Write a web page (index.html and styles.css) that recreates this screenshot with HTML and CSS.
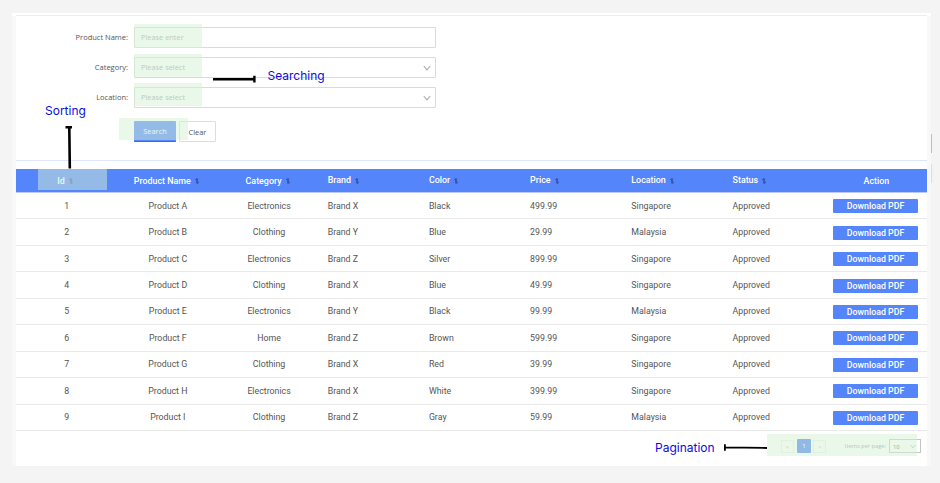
FILE: index.html
```
<!DOCTYPE html>
<html lang="en">
<head>
<meta charset="utf-8">
<title>Products</title>
<link rel="stylesheet" href="styles.css">
</head>
<body>
<main class="page">
  <form class="filters">
    <div class="field"><label>Product Name:</label><div class="control"><span>Please enter</span></div></div>
    <div class="field"><label>Category:</label><div class="control"><span>Please select</span><svg class="chev" viewBox="0 0 8 6"><path d="M.8 1 4 4.8 7.2 1"/></svg></div></div>
    <div class="field"><label>Location:</label><div class="control"><span>Please select</span><svg class="chev" viewBox="0 0 8 6"><path d="M.8 1 4 4.8 7.2 1"/></svg></div></div>
    <div class="buttons"><button type="button" class="search">Search</button><button type="button" class="clear">Clear</button></div>
  </form>
  <section class="products">
    <div class="row head" id="head"></div>
    <div id="rows"></div>
    <div class="pager">
      <span class="step">&lt;</span><span class="current">1</span><span class="step">&gt;</span>
      <span class="per">Items per page:</span>
      <span class="size">10<svg class="chev" viewBox="0 0 8 6"><path d="M.8 1 4 4.8 7.2 1"/></svg></span>
    </div>
  </section>
</main>
<i class="mark mark-name"></i><i class="mark mark-category"></i><i class="mark mark-location"></i>
<i class="mark mark-search"></i><i class="mark mark-id"></i><i class="mark mark-pager"></i>
<i class="tab tab-blue"></i><i class="tab tab-orange"></i>
<svg class="lines" viewBox="0 0 940 483">
  <path stroke-width="2.6" d="M213 79.3H254M69.3 127 69.8 168.5"/>
  <path stroke-width="2.4" d="M254.4 75.8V82.5M65.5 127.3H72"/>
  <path stroke-width="1.8" d="M725 447.3 767 448M724.9 444.2V450.8"/>
</svg>
<b class="note note-search">Searching</b>
<b class="note note-sort">Sorting</b>
<b class="note note-page">Pagination</b>
<script src="table.js"></script>
</body>
</html>
```
FILE: styles.css
```
* { box-sizing: border-box; }
body { margin: 0; width: 940px; height: 483px; overflow: hidden; position: relative; background: #f4f4f4; font-family: Roboto, sans-serif; color: #555; }
.page { margin: 13px 9px 0 12px; width: 919px; height: 453px; padding: 2px 4px 0; background: linear-gradient(#fff 0 3px, #f8f8f8 3px); }
.filters { height: 146px; background: #fff; border-top: 1px solid #ededed; border-bottom: 1.5px solid #dde6fc; padding-top: 11px; }
.field { display: flex; align-items: center; height: 21px; margin-bottom: 9px; }
.field label { width: 112px; padding-bottom: 1px; text-align: right; font: 7.5px "Open Sans", sans-serif; white-space: nowrap; }
.control { display: flex; align-items: center; justify-content: space-between; width: 302px; height: 21px; margin-left: 6px; padding: 0 4px 0 7px; border: 1px solid #dadada; border-radius: 1px; font: 7.4px "Open Sans", sans-serif; color: #a4a4a4; }
.control span { margin-left: -1px; padding-bottom: 1px; }
.chev { width: 8px; height: 6px; fill: none; stroke: #aaa; stroke-width: 1.1; }
.buttons { display: flex; gap: 3px; padding: 4px 0 0 118px; }
.buttons button { height: 21px; padding: 0; border-radius: 1px; font: 7.4px "Open Sans", sans-serif; }
.search { width: 42px; border: 0; border-bottom: 1px solid #3c68ec; background: #5585fb; color: #fff; }
.buttons .clear { width: 37px; border: 1px solid #ddd; background: #fff; color: #555; }
.products { height: 305px; padding-top: 8px; background: #fff; }
.row { display: grid; grid-template-columns: repeat(9, 1fr); align-items: center; height: 26.45px; border-bottom: 1px solid #e9e9e9; font-size: 8.8px; }
.row > span { padding: 0 8px; white-space: nowrap; }
.row > span:nth-child(-n+3), .row > span:last-child { padding: 0; text-align: center; }
.head { height: 24px; background: #5585fb; border-bottom: 1px solid #bccaf0; color: #fff; font-weight: 500; font-size: 8.9px; }
.head > span { padding-bottom: 1px; }
.sort { width: 4px; height: 6px; margin: 0 3px 0 4px; vertical-align: -0.5px; fill: none; stroke: #2d4a9a; stroke-width: .8; }
.row .download { display: block; width: 85.5px; height: 14px; margin: 1px 0 0 7px; border-radius: 1px; background: #5585fb; color: #fff; font-weight: 500; font-size: 8.8px; line-height: 15px; }
.pager { display: flex; align-items: center; height: 31px; padding-left: 765px; font-size: 6px; color: #999; }
.step { width: 13px; text-align: center; border: 1px solid #eee; height: 13px; line-height: 11px; color: #bbb; }
.current { width: 14px; height: 14px; margin: 0 2px 0 3px; border-radius: 1px; background: #4c83f6; color: #fff; line-height: 14px; text-align: center; }
.per { width: 60px; text-align: right; white-space: nowrap; font-family: "Open Sans", sans-serif; font-size: 5.7px; }
.size { display: flex; align-items: center; justify-content: space-between; width: 32px; height: 14px; margin-left: 3px; padding: 0 4px 0 3px; border: 1px solid #c4c4c4; color: #777; }
.size .chev { width: 6px; height: 5px; }
.mark { position: absolute; background: rgba(211, 241, 211, .5); }
.mark-name { left: 134px; top: 24px; width: 68px; height: 24px; }
.mark-category { left: 134px; top: 54px; width: 68px; height: 23px; }
.mark-location { left: 134px; top: 83px; width: 68px; height: 23px; }
.mark-search { left: 119px; top: 118px; width: 69px; height: 22px; }
.mark-id { left: 38px; top: 169px; width: 69px; height: 21px; }
.mark-pager { left: 767px; top: 434px; width: 150px; height: 22px; }
.tab { position: absolute; left: 931px; width: 1px; }
.tab-blue { top: 134px; height: 19px; background: #a9bdf0; }
.tab-orange { top: 164px; height: 19px; background: #f5d9b4; }
.lines { position: absolute; left: 0; top: 0; width: 940px; height: 483px; fill: none; stroke: #000; }
.note { position: absolute; font: 12px/14px Inter, sans-serif; color: #0c0cdc; white-space: nowrap; }
.note-search { left: 267.5px; top: 69px; }
.note-sort { left: 45px; top: 104px; }
.note-page { left: 655px; top: 441px; }
```
FILE: table.js
```
const heads = ["Id", "Product Name", "Category", "Brand", "Color", "Price", "Location", "Status", "Action"];
const rows = [
  ["1", "Product A", "Electronics", "Brand X", "Black", "499.99", "Singapore"],
  ["2", "Product B", "Clothing", "Brand Y", "Blue", "29.99", "Malaysia"],
  ["3", "Product C", "Electronics", "Brand Z", "Silver", "899.99", "Singapore"],
  ["4", "Product D", "Clothing", "Brand X", "Blue", "49.99", "Singapore"],
  ["5", "Product E", "Electronics", "Brand Y", "Black", "99.99", "Malaysia"],
  ["6", "Product F", "Home", "Brand Z", "Brown", "599.99", "Singapore"],
  ["7", "Product G", "Clothing", "Brand X", "Red", "39.99", "Singapore"],
  ["8", "Product H", "Electronics", "Brand X", "White", "399.99", "Singapore"],
  ["9", "Product I", "Clothing", "Brand Z", "Gray", "59.99", "Malaysia"]
];
const sort = '<svg class="sort" viewBox="0 0 4 6"><path d="M.2 2 1.6.5V5.5M2.6.5V5.5L4 4"/></svg>';
document.getElementById("head").innerHTML = heads.map(h => `<span>${h}${h === "Action" ? "" : sort}</span>`).join("");
document.getElementById("rows").innerHTML = rows.map(r =>
  `<div class="row">${r.map(c => `<span>${c}</span>`).join("")}<span>Approved</span><span><b class="download">Download PDF</b></span></div>`).join("");
```
